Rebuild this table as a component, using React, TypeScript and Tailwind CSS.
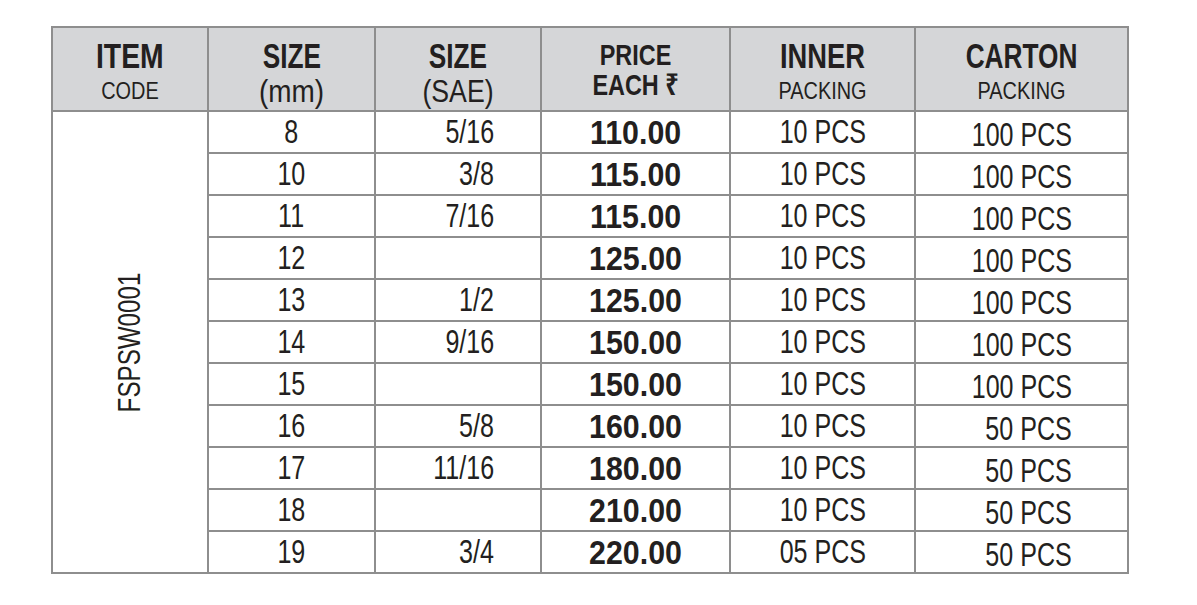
const rows = [
  { mm: "8", sae: "5/16", price: "110.00", inner: "10 PCS", carton: "100 PCS" },
  { mm: "10", sae: "3/8", price: "115.00", inner: "10 PCS", carton: "100 PCS" },
  { mm: "11", sae: "7/16", price: "115.00", inner: "10 PCS", carton: "100 PCS" },
  { mm: "12", sae: "", price: "125.00", inner: "10 PCS", carton: "100 PCS" },
  { mm: "13", sae: "1/2", price: "125.00", inner: "10 PCS", carton: "100 PCS" },
  { mm: "14", sae: "9/16", price: "150.00", inner: "10 PCS", carton: "100 PCS" },
  { mm: "15", sae: "", price: "150.00", inner: "10 PCS", carton: "100 PCS" },
  { mm: "16", sae: "5/8", price: "160.00", inner: "10 PCS", carton: "50 PCS" },
  { mm: "17", sae: "11/16", price: "180.00", inner: "10 PCS", carton: "50 PCS" },
  { mm: "18", sae: "", price: "210.00", inner: "10 PCS", carton: "50 PCS" },
  { mm: "19", sae: "3/4", price: "220.00", inner: "05 PCS", carton: "50 PCS" },
];

const font = { fontFamily: '"Liberation Sans", Arial, "Noto Sans", sans-serif' };

const cell = "border-2 border-[#8e8e8e] p-0";

function Head({ top, bottom, bigScale, bottomClass }: { top: string; bottom: string; bigScale: string; bottomClass: string }) {
  return (
    <th className={`${cell} align-top pt-[10px] font-normal`}>
      <div className="text-[35px] font-bold leading-[35px]">
        <span className={`inline-block ${bigScale}`}>{top}</span>
      </div>
      <div className={bottomClass}>
        <span className="inline-block">{bottom}</span>
      </div>
    </th>
  );
}

export default function App() {
  return (
    <div className="w-[1197px] h-[605px] bg-white pt-[26px] pl-[51px] text-[#231f20]" style={font}>
      <table className="w-[1076px] table-fixed border-collapse border-2 border-[#8e8e8e]">
        <colgroup>
          <col className="w-[156px]" />
          <col className="w-[167px]" />
          <col className="w-[166px]" />
          <col className="w-[189px]" />
          <col className="w-[185px]" />
          <col className="w-[213px]" />
        </colgroup>
        <thead>
          <tr className="h-[84px] bg-[#d5d6d8]">
            <Head top="ITEM" bottom="CODE" bigScale="scale-x-[0.81]" bottomClass="mt-[6px] text-[24px] leading-[24px] scale-x-[0.83]" />
            <Head top="SIZE" bottom="(mm)" bigScale="scale-x-[0.75]" bottomClass="mt-[3px] text-[31px] leading-[31px] scale-x-[0.9]" />
            <Head top="SIZE" bottom="(SAE)" bigScale="scale-x-[0.75]" bottomClass="mt-[3px] text-[31px] leading-[31px] scale-x-[0.86]" />
            <th className={`${cell} align-top pt-[12px]`}>
              <div className="text-[30px] font-bold leading-[30px] scale-x-[0.78]">PRICE</div>
              <div className="text-[30px] font-bold leading-[30px] scale-x-[0.78]">EACH ₹</div>
            </th>
            <Head top="INNER" bottom="PACKING" bigScale="scale-x-[0.78]" bottomClass="mt-[6px] text-[24px] leading-[24px] scale-x-[0.83]" />
            <Head top="CARTON" bottom="PACKING" bigScale="scale-x-[0.75]" bottomClass="mt-[6px] text-[24px] leading-[24px] scale-x-[0.83]" />
          </tr>
        </thead>
        <tbody>
          {rows.map((r, i) => (
            <tr key={r.mm} className="h-[42px]">
              {i === 0 && (
                <td rowSpan={rows.length} className={`${cell} align-middle overflow-hidden`}>
                  <div className="flex h-0 items-center justify-center">
                    <span className="inline-block -rotate-90 scale-x-[0.78] whitespace-nowrap text-[31px] leading-none">FSPSW0001</span>
                  </div>
                </td>
              )}
              <td className={`${cell} text-center text-[33px] leading-none pb-[2px]`}>
                <span className="inline-block scale-x-[0.76]">{r.mm}</span>
              </td>
              <td className={`${cell} pr-[46px] text-right text-[33px] leading-none pb-[2px]`}>
                <span className="inline-block origin-right scale-x-[0.76]">{r.sae}</span>
              </td>
              <td className={`${cell} text-center text-[33px] font-bold leading-none`}>
                <span className="inline-block scale-x-[0.92]">{r.price}</span>
              </td>
              <td className={`${cell} text-center text-[33px] leading-none pb-[2px]`}>
                <span className="inline-block scale-x-[0.76]">{r.inner}</span>
              </td>
              <td className={`${cell} pr-[55px] text-right text-[33px] leading-none pt-[5px]`}>
                <span className="inline-block origin-right scale-x-[0.76]">{r.carton}</span>
              </td>
            </tr>
          ))}
        </tbody>
      </table>
    </div>
  );
}
